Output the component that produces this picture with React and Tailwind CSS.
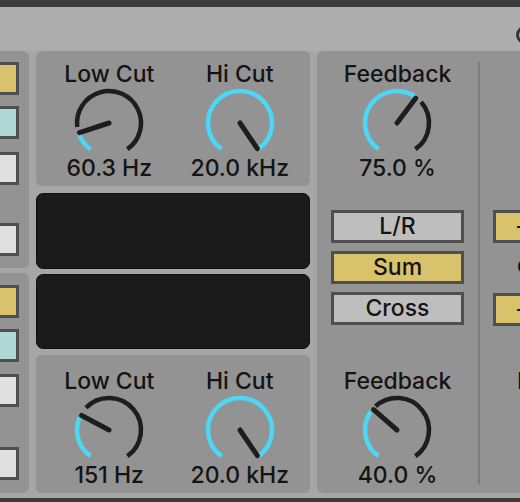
import React from 'react';

const BLUE = '#4cd8f4';
const ARC = '#1d1d1d';

// point on a circle, angle measured clockwise from 12 o'clock
function pt(r, a) {
  const t = (a * Math.PI) / 180;
  return [36 + r * Math.sin(t), 36 - r * Math.cos(t)];
}

function arc(a0, a1) {
  const [x0, y0] = pt(32, a0);
  const [x1, y1] = pt(32, a1);
  const large = a1 - a0 > 180 ? 1 : 0;
  return `M${x0} ${y0} A32 32 0 ${large} 1 ${x1} ${y1}`;
}

function Knob({ angle, blueEnd, blackStart }) {
  const [nx, ny] = pt(31, angle);
  return (
    <svg width="72" height="69" viewBox="0 0 72 69" className="block mt-[1px] overflow-visible">
      <path d={arc(-145, blueEnd)} fill="none" stroke={BLUE} strokeWidth="4.5" />
      {blackStart < 145 && (
        <path d={arc(blackStart, 145)} fill="none" stroke={ARC} strokeWidth="4.5" />
      )}
      <line x1="36" y1="36" x2={nx} y2={ny} stroke={ARC} strokeWidth="5" strokeLinecap="round" />
    </svg>
  );
}

function KnobBlock({ label, value, knob }) {
  return (
    <div className="flex flex-col items-center">
      <div className="h-[24px] text-[23px] leading-[24px] whitespace-nowrap">{label}</div>
      <Knob {...knob} />
      <div className="h-[24px] text-[23px] leading-[24px] whitespace-nowrap">{value}</div>
    </div>
  );
}

function Btn({ children, color, className = '' }) {
  return (
    <div
      className={`h-[33px] border-[3px] border-[#4f4f4f] flex items-center justify-center text-[23px] leading-[23px] ${color} ${className}`}
    >
      {children}
    </div>
  );
}

function SideBtn({ color, className = '' }) {
  return <div className={`h-[33px] w-[31px] shrink-0 -ml-[12px] border-[3px] border-[#4f4f4f] ${color} ${className}`} />;
}

function FilterPanel({ low, lowKnob, className }) {
  return (
    <div className={`shrink-0 bg-[#939393] rounded-[6px] grid grid-cols-2 pl-[8px] pr-[5px] ${className}`}>
      <KnobBlock label="Low Cut" value={low} knob={lowKnob} />
      <KnobBlock label="Hi Cut" value="20.0 kHz" knob={{ angle: 146, blueEnd: 145, blackStart: 145 }} />
    </div>
  );
}

export default function App() {
  return (
    <div className="w-[520px] h-[502px] overflow-hidden bg-[#a6a6a6] flex flex-col font-['Inter','Liberation_Sans',Arial,sans-serif] font-medium text-[#141414]">
      <div className="h-[7px] shrink-0 bg-[#3c3c3c]" />
      <div className="h-[44px] shrink-0 bg-[#adadad] relative">
        <div className="absolute left-[516px] top-[19px] w-[18px] h-[18px] rounded-full border-[3px] border-[#333]" />
      </div>

      <div className="h-[442px] shrink-0 flex gap-[7px]">
        {/* left strip */}
        <div className="w-[29px] shrink-0 flex flex-col gap-[5px]">
          <div className="h-[217px] shrink-0 bg-[#939393] rounded-r-[6px] flex flex-col">
            <SideBtn color="bg-[#dac16c]" className="mt-[11px]" />
            <SideBtn color="bg-[#aed8d5]" className="mt-[11px]" />
            <SideBtn color="bg-[#e0e0e0]" className="mt-[13px]" />
            <SideBtn color="bg-[#e0e0e0]" className="mt-[38px]" />
          </div>
          <div className="flex-1 bg-[#939393] rounded-r-[6px] flex flex-col">
            <SideBtn color="bg-[#dac16c]" className="mt-[12px]" />
            <SideBtn color="bg-[#aed8d5]" className="mt-[11px]" />
            <SideBtn color="bg-[#e0e0e0]" className="mt-[12px]" />
            <SideBtn color="bg-[#e0e0e0]" className="mt-[40px]" />
          </div>
        </div>

        {/* filters and displays */}
        <div className="w-[274px] shrink-0 flex flex-col">
          <FilterPanel
            className="h-[135px] pt-[11px]"
            low="60.3 Hz"
            lowKnob={{ angle: -108, blueEnd: -112, blackStart: -97 }}
          />
          <div className="h-[76px] shrink-0 mt-[7px] rounded-[7px] bg-[#1b1b1b] border border-[#101010]" />
          <div className="h-[75px] shrink-0 mt-[5px] rounded-[7px] bg-[#1b1b1b] border border-[#101010]" />
          <FilterPanel
            className="h-[138px] mt-[6px] pt-[14px]"
            low="151 Hz"
            lowKnob={{ angle: -62, blueEnd: -67, blackStart: -46 }}
          />
        </div>

        {/* feedback + routing */}
        <div className="w-[260px] shrink-0 bg-[#939393] rounded-l-[6px] flex">
          <div className="w-[161px] shrink-0 flex flex-col items-center pt-[11px]">
            <KnobBlock label="Feedback" value="75.0 %" knob={{ angle: 37, blueEnd: 37, blackStart: 49 }} />
            <div className="w-[133px] mt-[30px] flex flex-col gap-[8px]">
              <Btn color="bg-[#bebebe]">L/R</Btn>
              <Btn color="bg-[#dac16c]">Sum</Btn>
              <Btn color="bg-[#bebebe]">Cross</Btn>
            </div>
            <div className="mt-[44px]">
              <KnobBlock label="Feedback" value="40.0 %" knob={{ angle: -49, blueEnd: -55, blackStart: -42 }} />
            </div>
          </div>
          <div className="w-[2px] shrink-0 bg-[#7b7b7b] mt-[11px] mb-[9px]" />
          <div className="w-[97px] shrink-0 flex flex-col pl-[13px] pt-[159px] whitespace-nowrap">
            <div className="w-[133px] h-[33px] border-[3px] border-[#4f4f4f] bg-[#dac16c] text-[22px] leading-[27px] pl-[21px]">
              –
            </div>
            <div className="mt-[10px] ml-[24px] h-[24px] text-[23px] leading-[24px]">o</div>
            <div className="w-[133px] h-[33px] mt-[16px] border-[3px] border-[#4f4f4f] bg-[#dac16c] text-[22px] leading-[27px] pl-[21px]">
              –
            </div>
            <div className="mt-[43px] ml-[24px] h-[24px] text-[23px] leading-[24px]">Dry/Wet</div>
          </div>
        </div>
      </div>

      <div className="h-[5px] shrink-0" />
      <div className="flex-1 bg-[#3c3c3c]" />
    </div>
  );
}
